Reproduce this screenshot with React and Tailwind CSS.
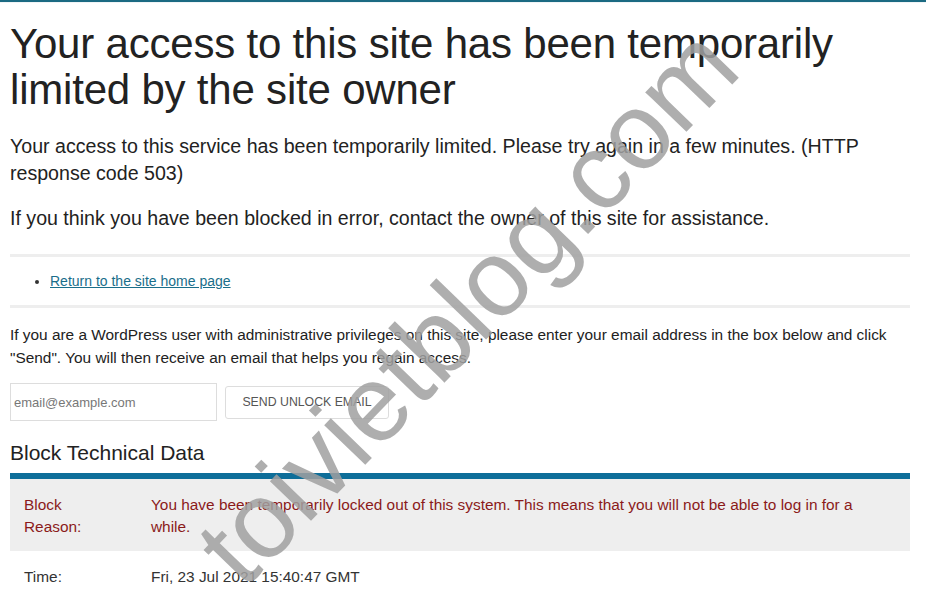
import React from 'react';

const font = { fontFamily: '"Liberation Sans", Arial, sans-serif' };

export default function App() {
  return (
    <div className="relative w-[926px] h-[603px] overflow-hidden bg-white text-[#222]" style={font}>
      {/* top rule */}
      <div className="h-[2px] bg-[#1b6a82]" />
      <div className="h-px bg-[#f0f4f6]" />

      <div className="px-[10px] w-[920px]">
        <h1 className="mt-[18px] text-[42px] leading-[46px] font-normal tracking-[-0.2px] text-[#222]">
          Your access to this site has been temporarily limited by the site owner
        </h1>

        <p className="mt-[20px] text-[19.6px] leading-[27px] text-[#222]">
          Your access to this service has been temporarily limited. Please try again in a few minutes. (HTTP response code 503)
        </p>
        <p className="mt-[18px] text-[19.6px] leading-[27px] text-[#222]">
          If you think you have been blocked in error, contact the owner of this site for assistance.
        </p>

        <div className="mt-[22px] h-[3px] bg-[#eeeeee]" />
        <ul className="py-[14px] pl-[40px] list-disc text-[14px] leading-[20px] marker:text-[#333]">
          <li>
            <a href="#" className="text-[#1a6e8a] underline">Return to the site home page</a>
          </li>
        </ul>
        <div className="h-[3px] bg-[#eeeeee]" />

        <p className="mt-[15px] text-[15.4px] leading-[23px] text-[#222]">
          If you are a WordPress user with administrative privileges on this site, please enter your email address in the box below and click "Send". You will then receive an email that helps you regain access.
        </p>

        <div className="mt-[14px] flex items-center gap-[8px]">
          <input
            type="text"
            placeholder="email@example.com"
            className="w-[207px] h-[38px] border border-[#dddddd] px-[3px] text-[13px] text-[#555] placeholder:text-[#777] outline-none"
            style={font}
          />
          <button
            className="w-[164px] h-[33px] border border-[#dddddd] rounded-[3px] bg-white text-[12.3px] text-[#555] uppercase"
            style={font}
          >
            Send Unlock Email
          </button>
        </div>

        <h2 className="mt-[19px] text-[21px] leading-[26px] font-normal text-[#222]">Block Technical Data</h2>

        <div className="mt-[7px] border-t-[6px] border-[#0e6e99]">
          <div className="flex bg-[#eeeeee] px-[14px] pt-[15px] pb-[13px] text-[15.4px] leading-[22px] text-[#8b1a1a]">
            <div className="w-[127px] shrink-0">Block<br />Reason:</div>
            <div className="pr-[40px]">
              You have been temporarily locked out of this system. This means that you will not be able to log in for a while.
            </div>
          </div>
          <div className="flex px-[14px] pt-[15px] text-[15.4px] leading-[22px] text-[#333]">
            <div className="w-[127px] shrink-0">Time:</div>
            <div>Fri, 23 Jul 2021 15:40:47 GMT</div>
          </div>
        </div>
      </div>

      {/* watermark */}
      <div
        className="absolute left-[467px] top-[306px] pointer-events-none select-none whitespace-nowrap text-[108px] leading-none text-[rgba(160,160,160,0.85)]"
        style={{ ...font, transform: 'translate(-50%, -50%) rotate(-46deg)' }}
      >
        toivietblog.com
      </div>
    </div>
  );
}
